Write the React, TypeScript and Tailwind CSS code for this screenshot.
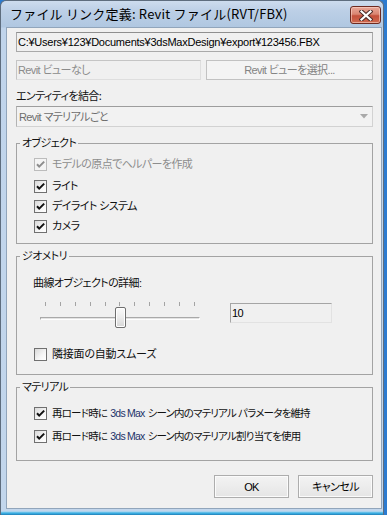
import React from "react";

const PALT = "[font-feature-settings:'palt'] [font-variant-east-asian:proportional-width]";

function CheckBox({ checked, disabled }: { checked?: boolean; disabled?: boolean }) {
  return (
    <span
      className={`flex h-[13px] w-[13px] shrink-0 items-center justify-center border ${
        disabled
          ? "border-[#bcbcbc] bg-[#f4f4f4]"
          : "border-[#707070] bg-[linear-gradient(135deg,#d9d9d9_0%,#f6f6f6_60%,#ffffff_100%)]"
      }`}
    >
      {checked && (
        <svg width="11" height="11" viewBox="0 0 11 11">
          <path
            d="M2 5.3 L4.2 7.6 L9.2 2.6"
            fill="none"
            stroke={disabled ? "#8d8d8d" : "#111111"}
            strokeWidth="2"
          />
        </svg>
      )}
    </span>
  );
}

function CheckRow({
  label,
  checked,
  disabled,
  className = "",
  textClass = "",
}: {
  label: React.ReactNode;
  checked?: boolean;
  disabled?: boolean;
  className?: string;
  textClass?: string;
}) {
  return (
    <div className={`flex h-[20px] items-center gap-[5px] pl-[17px] ${className}`}>
      <CheckBox checked={checked} disabled={disabled} />
      <span className={`whitespace-nowrap leading-[16px] ${disabled ? "text-[#8d8d8d]" : "text-[#111]"} ${textClass}`}>
        {label}
      </span>
    </div>
  );
}

function Legend({ children }: { children: React.ReactNode }) {
  return <legend className="ml-[3px] px-[2px] leading-[13px] text-[#111]">{children}</legend>;
}

function CloseButton() {
  return (
    <div className="mt-[5px] flex h-[18px] w-[31px] items-center justify-center rounded-[3px] border border-[#6e2a20] bg-[linear-gradient(to_bottom,#e9a799_0%,#da8672_45%,#c4503b_55%,#cf6a4f_100%)] shadow-[inset_0_0_0_1px_rgba(255,220,210,0.55)]">
      <svg width="14" height="11" viewBox="0 0 14 11">
        <path d="M2.5 1.5 L11.5 9.5 M11.5 1.5 L2.5 9.5" stroke="#4a2b28" strokeWidth="4.2" strokeLinecap="square" fill="none" />
        <path d="M2.5 1.5 L11.5 9.5 M11.5 1.5 L2.5 9.5" stroke="#ffffff" strokeWidth="2.2" strokeLinecap="square" fill="none" />
      </svg>
    </div>
  );
}

function Slider() {
  const ticks = Array.from({ length: 11 });
  return (
    <div className="relative h-[28px] w-[160px]">
      <div className="mt-[1px] flex h-[4px] justify-between px-[5px]">
        {ticks.map((_, i) => (
          <span key={i} className="h-[4px] w-px bg-[#a4a4a4]" />
        ))}
      </div>
      <div className="mt-[11px] h-[3px] border border-[#a9a9a9] border-b-white border-r-white bg-[#e3e3e3]" />
      <div className="absolute left-[75px] top-[6px] h-[21px] w-[11px] rounded-[2px] border border-[#6f6f6f] bg-[linear-gradient(to_bottom,#fafafa_0%,#ececec_50%,#d6d6d6_100%)] shadow-[inset_0_0_0_1px_#ffffff]" />
    </div>
  );
}

export default function App() {
  return (
    <div
      className={`relative h-[515px] w-[387px] overflow-hidden bg-[#2c7bd0] font-['Liberation_Sans','Noto_Sans_CJK_JP',sans-serif] text-[11px] tracking-[-0.6px] ${PALT}`}
    >
      <div className="flex h-[515px] w-[384px] flex-col rounded-t-[6px] border border-b-0 border-[#5e6d7e] bg-[linear-gradient(to_bottom,#cddcee_0px,#bccfe6_10px,#b0c7e1_26px,#c0d4eb_27px,#c2d6ec_100%)]">
        {/* title bar */}
        <div className="flex h-[26px] items-start justify-between pl-[9px] pr-[2px]">
          <span className="mt-[4px] whitespace-nowrap font-['Noto_Sans_CJK_JP',sans-serif] text-[13px] leading-[18px] tracking-[0.2px] text-black [font-feature-settings:normal] [font-variant-east-asian:normal]">
            ファイル リンク定義: Revit ファイル(RVT/FBX)
          </span>
          <CloseButton />
        </div>

        {/* client area */}
        <div className="ml-[5px] mr-[1px] flex flex-1 flex-col border border-[#91a5bb] bg-[#f0f0f0] pl-[9px] pr-[8px]">
          {/* path box */}
          <div className="mt-[4px] flex h-[20px] items-center whitespace-nowrap border border-[#a9a9a9] border-t-[#8f8f8f] bg-[#f0f0f0] pl-[1px] text-[11px] leading-[16px] tracking-[-0.25px] text-black">
            C:¥Users¥123¥Documents¥3dsMaxDesign¥export¥123456.FBX
          </div>

          {/* revit view row */}
          <div className="mt-[8px] flex h-[20px] gap-[5px]">
            <div className="flex w-[185px] items-center border border-[#c5c5c5] border-b-[#dedede] border-r-[#dedede] bg-[#f0f0f0] pl-[1px] leading-[16px] text-[#8b8b8b]">
              Revit ビューなし
            </div>
            <div className="flex flex-1 items-center justify-center border border-[#c2c2c2] bg-[#f4f4f4] leading-[16px] text-[#838383]">
              Revit ビューを選択...
            </div>
          </div>

          {/* entity label */}
          <div className="mt-[8px] h-[16px] leading-[16px] text-[#111]">エンティティを結合：</div>

          {/* dropdown */}
          <div className="mt-[2px] flex h-[21px] items-center justify-between border border-[#d2d2d2] border-t-[#9d9d9d] border-l-[#b3b3b3] bg-[#f2f2f2] pl-[2px] pr-[4px] leading-[16px] text-[#6d6d6d]">
            <span>Revit マテリアルごと</span>
            <svg width="8" height="5" viewBox="0 0 8 5">
              <path d="M0 0 L8 0 L4 4.5 Z" fill="#a9a9a9" />
            </svg>
          </div>

          {/* objects group */}
          <fieldset className="mt-[10px] border border-[#a3a3a3] pb-[7px]">
            <Legend>オブジェクト</Legend>
            <CheckRow className="mt-[4px]" checked disabled label="モデルの原点でヘルパーを作成" />
            <CheckRow className="mt-[2px]" checked label="ライト" />
            <CheckRow checked label="デイライト システム" />
            <CheckRow checked label="カメラ" />
          </fieldset>

          {/* geometry group */}
          <fieldset className="mt-[6px] border border-[#a3a3a3] pb-[10px]">
            <Legend>ジオメトリ</Legend>
            <div className="mt-[12px] h-[16px] pl-[16px] leading-[16px] text-[#111]">曲線オブジェクトの詳細:</div>
            <div className="mt-[10px] flex items-start pl-[23px]">
              <Slider />
              <div className="ml-[30px] mt-[2px] flex h-[20px] w-[102px] items-center border border-[#a5a5a5] border-b-[#e2e2e2] border-r-[#e2e2e2] bg-[#f0f0f0] pl-[1px] leading-[16px] text-black">
                10
              </div>
            </div>
            <CheckRow className="mt-[15px]" textClass="tracking-[-0.2px]" label="隣接面の自動スムーズ" />
          </fieldset>

          {/* material group */}
          <fieldset className="mt-[6px] border border-[#a3a3a3] pb-[14px]">
            <Legend>マテリアル</Legend>
            <CheckRow
              className="mt-[9px]"
              textClass="text-[10.5px] tracking-[-0.8px]"
              checked
              label={
                <>
                  再ロード時に <span className="mx-[1px] text-[#24336a]">3ds Max</span> シーン内のマテリアル パラメータを維持
                </>
              }
            />
            <CheckRow
              className="mt-[3px]"
              textClass="text-[10.5px] tracking-[-0.8px]"
              checked
              label={
                <>
                  再ロード時に <span className="mx-[1px] text-[#24336a]">3ds Max</span> シーン内のマテリアル割り当てを使用
                </>
              }
            />
          </fieldset>

          {/* buttons */}
          <div className="mt-[14px] flex justify-end gap-[9px]">
            <div className="flex h-[23px] w-[75px] items-center justify-center border border-[#adadad] bg-[linear-gradient(to_bottom,#f3f3f3,#e5e5e5)] leading-[16px] text-black shadow-[inset_0_0_0_1px_#fbfbfb]">
              OK
            </div>
            <div className="flex h-[23px] w-[75px] items-center justify-center border border-[#adadad] bg-[linear-gradient(to_bottom,#f3f3f3,#e5e5e5)] leading-[16px] text-black shadow-[inset_0_0_0_1px_#fbfbfb]">
              キャンセル
            </div>
          </div>
        </div>

        {/* bottom frame */}
        <div className="h-[6px] bg-[linear-gradient(to_bottom,#c2d6ec_0px,#c2d6ec_2px,#8fd2f2_3px,#36a9de_4px,#36a9de_5px,#1c6ea6_6px)]" />
      </div>
    </div>
  );
}
